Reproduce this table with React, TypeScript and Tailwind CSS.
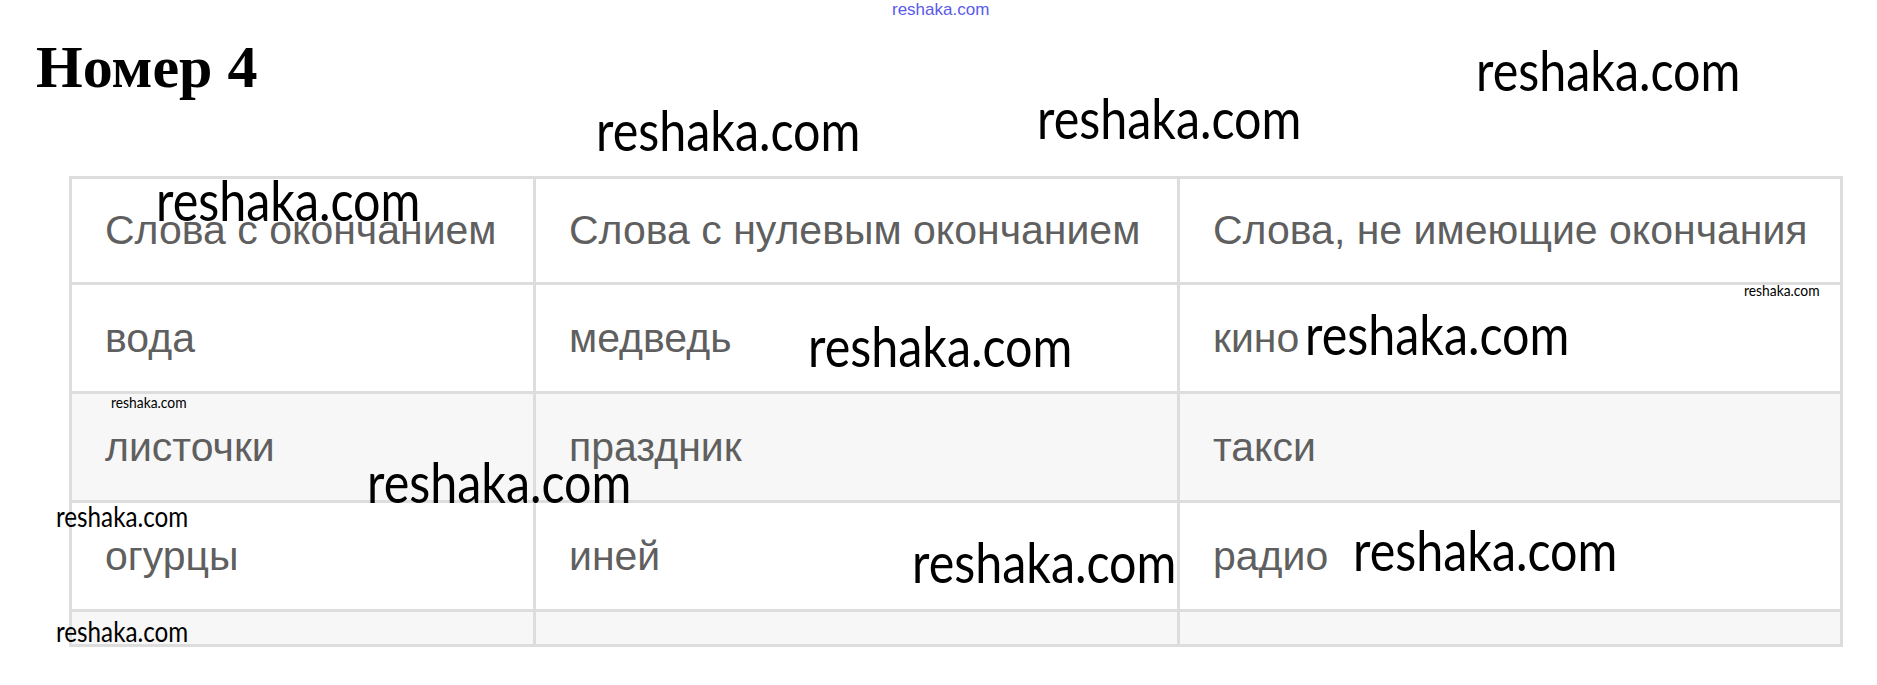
import React from 'react';

const rows = [
  { cells: ['вода', 'медведь', 'кино'], shaded: false },
  { cells: ['листочки', 'праздник', 'такси'], shaded: true },
  { cells: ['огурцы', 'иней', 'радио'], shaded: false },
];

// watermark overlays
const marks: { cls: string }[] = [
  { cls: 'left-[1476px] top-[42px] text-[56px]' },
  { cls: 'left-[596px] top-[102px] text-[56px]' },
  { cls: 'left-[1037px] top-[90px] text-[56px]' },
  { cls: 'left-[156px] top-[172px] text-[56px]' },
  { cls: 'left-[808px] top-[318px] text-[56px]' },
  { cls: 'left-[1305px] top-[306px] text-[56px]' },
  { cls: 'left-[367px] top-[454px] text-[56px]' },
  { cls: 'left-[912px] top-[534px] text-[56px]' },
  { cls: 'left-[1353px] top-[522px] text-[56px]' },
  { cls: 'left-[1744px] top-[282px] text-[16px]' },
  { cls: 'left-[111px] top-[394px] text-[16px]' },
  { cls: 'left-[56px] top-[502px] text-[28px]' },
  { cls: 'left-[56px] top-[617px] text-[28px]' },
];

function Cell({ children }: { children?: React.ReactNode }) {
  return (
    <td className="border-[3px] border-[#dddddd] px-[33px] align-middle whitespace-nowrap text-[#5f5f5f]">
      {children}
    </td>
  );
}

export default function App() {
  return (
    <div className="relative w-full h-[685px] overflow-hidden bg-white">
      <div className="absolute left-[892px] top-[1px] text-[17px] leading-none text-[#5a5aea] font-['Liberation_Sans',sans-serif]">
        reshaka.com
      </div>

      <h1 className="pl-[36px] pt-[37px] text-[60px] leading-none font-bold text-black font-['Liberation_Serif',serif]">
        Номер 4
      </h1>

      <table className="ml-[69px] mt-[79px] w-[1771px] table-fixed border-collapse text-[41px] leading-none font-['Liberation_Sans',sans-serif]">
        <colgroup>
          <col className="w-[464px]" />
          <col className="w-[644px]" />
          <col className="w-[663px]" />
        </colgroup>
        <tbody>
          <tr className="h-[106px] bg-white">
            <Cell>Слова с окончанием</Cell>
            <Cell>Слова с нулевым окончанием</Cell>
            <Cell>Слова, не имеющие окончания</Cell>
          </tr>
          {rows.map((r, i) => (
            <tr key={i} className={r.shaded ? 'h-[109px] bg-[#f7f7f7]' : 'h-[109px] bg-white'}>
              {r.cells.map((c) => (
                <Cell key={c}>{c}</Cell>
              ))}
            </tr>
          ))}
          <tr className="h-[35px] bg-[#f7f7f7]">
            <Cell />
            <Cell />
            <Cell />
          </tr>
        </tbody>
      </table>

      {marks.map((m, i) => (
        <span
          key={i}
          className={`absolute leading-none whitespace-nowrap text-black origin-left scale-x-[0.865] font-['Lato',sans-serif] ${m.cls}`}
        >
          reshaka.com
        </span>
      ))}
    </div>
  );
}
